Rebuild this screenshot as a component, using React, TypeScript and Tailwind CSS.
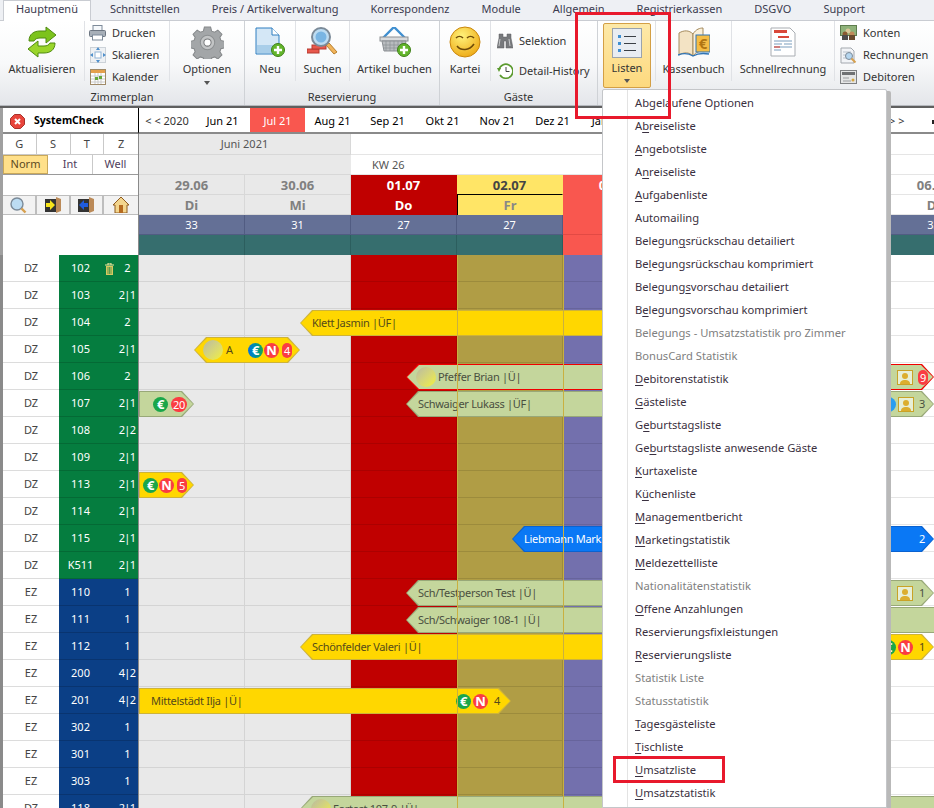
import React from 'react';

const tabs = ['Schnittstellen', 'Preis / Artikelverwaltung', 'Korrespondenz', 'Module', 'Allgemein', 'Registrierkassen', 'DSGVO', 'Support'];
const months = ['Jun 21', 'Jul 21', 'Aug 21', 'Sep 21', 'Okt 21', 'Nov 21', 'Dez 21', 'Jan 22', 'Feb 22', 'Mrz 22', 'Apr 22', 'Mai 22'];

const rooms: [string, string, string][] = [
  ['DZ', '102', '2'], ['DZ', '103', '2|1'], ['DZ', '104', '2'], ['DZ', '105', '2|1'], ['DZ', '106', '2'],
  ['DZ', '107', '2|1'], ['DZ', '108', '2|2'], ['DZ', '109', '2|1'], ['DZ', '113', '2|1'], ['DZ', '114', '2|1'],
  ['DZ', '115', '2|1'], ['DZ', 'K511', '2|1'], ['EZ', '110', '1'], ['EZ', '111', '1'], ['EZ', '112', '1'],
  ['EZ', '200', '4|2'], ['EZ', '201', '4|2'], ['EZ', '302', '1'], ['EZ', '301', '1'], ['EZ', '303', '1'], ['DZ', '118', '2|1'],
];

// label, index of the underlined letter (-1 = none), greyed out
const menuItems: [string, number, boolean?][] = [
  ['Abgelaufene Optionen', -1], ['Abreiseliste', 1], ['Angebotsliste', 0], ['Anreiseliste', 1], ['Aufgabenliste', 0],
  ['Automailing', -1], ['Belegungsrückschau detailiert', 7], ['Belegungsrückschau komprimiert', 2],
  ['Belegungsvorschau detailiert', 8], ['Belegungsvorschau komprimiert', 1],
  ['Belegungs - Umsatzstatistik pro Zimmer', -1, true], ['BonusCard Statistik', -1, true],
  ['Debitorenstatistik', 0], ['Gästeliste', 0], ['Geburtstagsliste', 1], ['Geburtstagsliste anwesende Gäste', 2],
  ['Kurtaxeliste', 0], ['Küchenliste', 1], ['Managementbericht', 0], ['Marketingstatistik', 0], ['Meldezettelliste', 0],
  ['Nationalitätenstatistik', -1, true], ['Offene Anzahlungen', 0], ['Reservierungsfixleistungen', -1], ['Reservierungsliste', 0],
  ['Statistik Liste', -1, true], ['Statusstatistik', -1, true], ['Tagesgästeliste', 0], ['Tischliste', 0],
  ['Umsatzliste', 0], ['Umsatzstatistik', 0],
];

function Refresh() {
  return (
    <svg width="32" height="32" viewBox="0 0 32 32">
      <path d="M3 15c0-7 5-10 11-10h6V1l10 8-10 8v-5h-6c-3 0-5 1-6 3z" fill="#7cc31c" stroke="#4f8a10" />
      <path d="M29 17c0 7-5 10-11 10h-6v4L2 23l10-8v5h6c3 0 5-1 6-3z" fill="#9ad52b" stroke="#4f8a10" />
    </svg>
  );
}

function Printer() {
  return (
    <svg width="17" height="16" viewBox="0 0 17 16">
      <rect x="4" y="0.5" width="9" height="5" fill="#f5f8fb" stroke="#7d8a99" />
      <rect x="0.5" y="5.5" width="16" height="6" rx="1" fill="#a7afb8" stroke="#6d7682" />
      <rect x="3.5" y="10" width="10" height="5" fill="#fff" stroke="#7d8a99" />
    </svg>
  );
}

function Scale() {
  return (
    <svg width="16" height="16" viewBox="0 0 16 16">
      <rect x="0.5" y="0.5" width="15" height="15" fill="#eef1f4" stroke="#ccd2d8" />
      <rect x="5" y="5" width="6" height="6" fill="#fff" stroke="#8fb3d6" />
      <path d="M8 0l2 3H6zM8 16l-2-3h4zM0 8l3-2v4zM16 8l-3 2V6z" fill="#4f8fcb" />
    </svg>
  );
}

function Calendar() {
  return (
    <svg width="16" height="16" viewBox="0 0 16 16">
      <rect x="0.5" y="0.5" width="15" height="15" fill="#fff" stroke="#a08a68" />
      <rect x="1" y="1" width="14" height="3" fill="#e5a04c" />
      <path d="M1 7h14M1 10h14M1 13h14M5 4v11M8 4v11M11 4v11" stroke="#c9c9c9" />
      <rect x="5" y="8" width="3" height="3" fill="#66a83a" />
      <rect x="9" y="7" width="3" height="3" fill="#66a83a" />
    </svg>
  );
}

function Gear() {
  return (
    <svg width="33" height="33" viewBox="0 0 32 32">
      <path
        d="M13 1h6l1 4 3 1 3-2 4 4-2 3 1 3 4 1v6l-4 1-1 3 2 3-4 4-3-2-3 1-1 4h-6l-1-4-3-1-3 2-4-4 2-3-1-3-4-1v-6l4-1 1-3-2-3 4-4 3 2 3-1z"
        fill="#a3a6a8"
        stroke="#85888a"
      />
      <circle cx="16" cy="16" r="7" fill="#c2c4c5" stroke="#8d9092" />
      <circle cx="16" cy="16" r="3.5" fill="#fff" stroke="#77797b" />
    </svg>
  );
}

function PlusBadge() {
  return (
    <svg width="14" height="14" viewBox="0 0 14 14" className="absolute right-0 bottom-0">
      <circle cx="7" cy="7" r="6.5" fill="#63b52b" stroke="#3e7f18" />
      <path d="M7 3v8M3 7h8" stroke="#fff" strokeWidth="2.4" />
    </svg>
  );
}

function NewDoc() {
  return (
    <div className="relative w-[30px] h-[30px]">
      <svg width="26" height="28" viewBox="0 0 26 28">
        <path d="M1 1h16l7 7v19H1z" fill="#d4e7f6" stroke="#2f7fc0" />
        <path d="M17 1v7h7" fill="#fff" stroke="#2f7fc0" />
        <rect x="2" y="18" width="21" height="8" fill="#a9cee9" />
      </svg>
      <PlusBadge />
    </div>
  );
}

function Search() {
  return (
    <svg width="32" height="30" viewBox="0 0 32 30">
      <rect x="0" y="22" width="12" height="4" fill="#e8584c" stroke="#b53a30" />
      <rect x="5" y="18" width="14" height="4" fill="#e8584c" stroke="#b53a30" />
      <path d="M19 18l8 9 3-2-8-9z" fill="#f2b45a" stroke="#b67f2f" />
      <circle cx="14" cy="10" r="9" fill="#bcdcf2" stroke="#7b8a98" strokeWidth="2" />
      <circle cx="14" cy="10" r="5.5" fill="#79b5e3" />
    </svg>
  );
}

function Basket() {
  return (
    <div className="relative w-[32px] h-[30px]">
      <svg width="30" height="26" viewBox="0 0 30 26">
        <path d="M15 0L3 12M15 0l12 12" stroke="#3f8fd0" strokeWidth="2.4" fill="none" />
        <rect x="1" y="10" width="28" height="4" fill="#d8dadc" stroke="#8b8f93" />
        <path d="M3 14h24l-2 10H5z" fill="#b9bcbf" stroke="#8b8f93" />
        <path d="M7 14v10M11 14v10M15 14v10M19 14v10M23 14v10M4 18h22M4 21h22" stroke="#8b8f93" strokeWidth="0.7" />
      </svg>
      <PlusBadge />
    </div>
  );
}

function Smiley() {
  return (
    <svg width="32" height="32" viewBox="0 0 32 32">
      <defs>
        <radialGradient id="smile" cx="0.4" cy="0.3" r="0.8">
          <stop offset="0" stopColor="#fff27a" />
          <stop offset="1" stopColor="#eca40e" />
        </radialGradient>
      </defs>
      <circle cx="16" cy="16" r="15" fill="url(#smile)" stroke="#c9860c" />
      <path d="M7 12c2-2 5-2 7 0M18 12c2-2 5-2 7 0" stroke="#6e4a08" strokeWidth="1.6" fill="none" />
      <path d="M8 20c4 5 12 5 17-2" stroke="#6e4a08" strokeWidth="1.6" fill="none" />
    </svg>
  );
}

function Binoculars() {
  return (
    <svg width="16" height="16" viewBox="0 0 16 16">
      <path d="M2 1h4v3h4V1h4v4l2 10H9V8H7v7H0L2 5z" fill="#77797c" stroke="#5d5f62" strokeWidth="0.5" />
      <path d="M3 6l-1 7M12 6l1 7" stroke="#c7c9cb" />
    </svg>
  );
}

function History() {
  return (
    <svg width="16" height="16" viewBox="0 0 16 16">
      <path d="M2 7a7 7 0 1 1 1 5" fill="#fff" stroke="#5b9a2e" strokeWidth="1.6" />
      <path d="M0 5l4 0-2 4z" fill="#5b9a2e" />
      <path d="M9 4v4.5h3.5" stroke="#444" fill="none" />
    </svg>
  );
}

function ListIcon() {
  return (
    <svg width="30" height="30" viewBox="0 0 30 30">
      <rect x="0.5" y="0.5" width="29" height="29" fill="#e9edf2" stroke="#9aa3ad" />
      <rect x="6" y="7" width="3" height="3" fill="#3f8fd0" />
      <rect x="6" y="14" width="3" height="3" fill="#3f8fd0" />
      <rect x="6" y="21" width="3" height="3" fill="#3f8fd0" />
      <path d="M12 8.5h12M12 15.5h12M12 22.5h12" stroke="#3b4046" />
    </svg>
  );
}

function CashBook() {
  return (
    <svg width="32" height="30" viewBox="0 0 32 30">
      <path d="M1 6c5-3 10-3 14 1v22c-4-4-9-4-14-1z" fill="#f3e3c4" stroke="#a48a5d" />
      <path d="M15 7c3-5 7-6 10-6v23c-3 0-7 1-10 5z" fill="#faf0da" stroke="#a48a5d" />
      <rect x="18" y="8" width="14" height="17" fill="#f5bd45" stroke="#2f74b5" />
      <text x="25" y="22" textAnchor="middle" fontSize="15" fontWeight="700" fill="#b07512">€</text>
      <path d="M0 28c5-2 10-2 15 1 5-3 10-3 16-2" stroke="#2f74b5" strokeWidth="1.4" fill="none" />
    </svg>
  );
}

function Invoice() {
  return (
    <svg width="26" height="30" viewBox="0 0 26 30">
      <path d="M1 1h19l5 5v23H1z" fill="#fff" stroke="#a9adb2" />
      <rect x="4" y="3" width="13" height="3" fill="#d9483a" />
      <rect x="8" y="9" width="11" height="2" fill="#d9483a" />
      <path d="M4 14h18M4 17h8M14 17h8M4 20h18M4 23h7" stroke="#7a9dbd" strokeWidth="1.2" />
      <path d="M4 20h6" stroke="#d9483a" strokeWidth="1.2" />
    </svg>
  );
}

function Konten() {
  return (
    <svg width="17" height="16" viewBox="0 0 17 16">
      <rect x="0.5" y="0.5" width="16" height="10" fill="#8fb27a" stroke="#5e7c4e" />
      <circle cx="8" cy="6" r="2.5" fill="#d9c89a" />
      <circle cx="5" cy="9" r="2.5" fill="#8a5a32" />
      <rect x="2" y="10" width="6" height="5" fill="#4d4d4d" />
      <circle cx="12" cy="9" r="2.5" fill="#c08a5a" />
      <rect x="9" y="10" width="6" height="5" fill="#6a4a2d" />
    </svg>
  );
}

function Bills() {
  return (
    <svg width="17" height="17" viewBox="0 0 17 17">
      <path d="M1 1h10l3 3v12H1z" fill="#f2f4f7" stroke="#a3a8ae" />
      <path d="M3 5h8M3 8h3M3 11h3" stroke="#b9c3cd" />
      <circle cx="9" cy="9" r="3.5" fill="#b5d6ef" stroke="#7c8a98" />
      <path d="M11.5 11.5l4 4" stroke="#d7a04e" strokeWidth="2" />
    </svg>
  );
}

function Debtors() {
  return (
    <svg width="17" height="14" viewBox="0 0 17 14">
      <rect x="0.5" y="0.5" width="16" height="13" fill="#e4e5e5" stroke="#7e8082" />
      <rect x="2" y="2" width="13" height="3" fill="#6f7173" />
      <path d="M3 8h6M3 11h8" stroke="#9b9d9f" />
      <circle cx="13" cy="10" r="1.5" fill="#d6a63d" />
    </svg>
  );
}

function BigButton({ label, width, icon, arrow, sep = true }: { label: string; width: string; icon: React.ReactNode; arrow?: boolean; sep?: boolean }) {
  return (
    <div className={`${width} relative flex flex-col items-center pt-[5px] ${sep ? 'border-r border-[#e0e2e6]' : ''} h-[60px]`}>
      <div className="h-[32px] flex items-center justify-center">{icon}</div>
      <span className="mt-px leading-[20px] whitespace-nowrap">{label}</span>
      {arrow && <span className="mt-[2px] border-x-[3px] border-t-[4px] border-x-transparent border-t-[#555]" />}
    </div>
  );
}

function SmallButton({ icon, label }: { icon: React.ReactNode; label: string }) {
  return (
    <div className="h-[22px] flex items-center gap-[6px] whitespace-nowrap">
      <span className="w-[17px] flex justify-center">{icon}</span>
      {label}
    </div>
  );
}

function Ribbon() {
  return (
    <div className="relative">
      <div className="h-[21px] flex items-end bg-[#eef0f4] border-b border-[#c9ccd2] text-[#3b3b4f]">
        <div className="ml-[3px] w-[88px] h-[21px] -mb-px pb-[3px] flex items-center justify-center bg-white border-x border-t border-[#c9ccd2]">Hauptmenü</div>
        <div className="flex ml-[19px] gap-[32px] h-[18px] mb-[2px] items-center">
          {tabs.map((t) => (
            <span key={t} className="whitespace-nowrap">{t}</span>
          ))}
        </div>
      </div>

      <div className="h-[85px] flex bg-gradient-to-b from-white via-[#f8f9fa] to-[#e4e6ea] border-b border-[#b5b8bd] text-[#333]">
        <div className="w-[245px] border-r border-[#cfd2d6] flex flex-col">
          <div className="flex h-[66px]">
            <BigButton label="Aktualisieren" width="w-[85px]" icon={<Refresh />} />
            <div className="w-[85px] pl-[4px] border-r border-[#e0e2e6] h-[60px] pt-px">
              <SmallButton icon={<Printer />} label="Drucken" />
              <SmallButton icon={<Scale />} label="Skalieren" />
              <SmallButton icon={<Calendar />} label="Kalender" />
            </div>
            <BigButton label="Optionen" width="w-[74px]" icon={<Gear />} arrow sep={false} />
          </div>
          <div className="text-center leading-[14px] mt-[3px]">Zimmerplan</div>
        </div>

        <div className="w-[195px] border-r border-[#cfd2d6] flex flex-col">
          <div className="flex h-[66px]">
            <BigButton label="Neu" width="w-[51px]" icon={<NewDoc />} />
            <BigButton label="Suchen" width="w-[54px]" icon={<Search />} />
            <BigButton label="Artikel buchen" width="w-[89px]" icon={<Basket />} sep={false} />
          </div>
          <div className="text-center leading-[14px] mt-[3px]">Reservierung</div>
        </div>

        <div className="w-[158px] border-r border-[#cfd2d6] flex flex-col">
          <div className="flex h-[66px]">
            <BigButton label="Kartei" width="w-[51px]" icon={<Smiley />} />
            <div className="pl-[5px] pt-[9px] flex flex-col gap-[8px]">
              <SmallButton icon={<Binoculars />} label="Selektion" />
              <SmallButton icon={<History />} label="Detail-History" />
            </div>
          </div>
          <div className="text-center leading-[14px] mt-[3px]">Gäste</div>
        </div>

        <div className="flex flex-1 pl-[5px]">
          <div className="mt-[2px] w-[48px] h-[65px] rounded-[2px] border border-[#d39f45] bg-gradient-to-b from-[#fde9a8] to-[#fdd97e] flex flex-col items-center pt-[3px]">
            <div className="h-[32px] flex items-center"><ListIcon /></div>
            <span className="-mt-px leading-[20px]">Listen</span>
            <span className="mt-px border-x-[3px] border-t-[4px] border-x-transparent border-t-[#555]" />
          </div>
          <div className="w-[5px] h-[60px] border-r border-[#e0e2e6]" />
          <BigButton label="Kassenbuch" width="w-[76px]" icon={<CashBook />} />
          <BigButton label="Schnellrechnung" width="w-[103px]" icon={<Invoice />} />
          <div className="pl-[5px] pt-px">
            <SmallButton icon={<Konten />} label="Konten" />
            <SmallButton icon={<Bills />} label="Rechnungen" />
            <SmallButton icon={<Debtors />} label="Debitoren" />
          </div>
        </div>
      </div>
    </div>
  );
}

function LeftHeader() {
  return (
    <div className="w-[136px] shrink-0 border-r border-[#8a8a8a] text-[#444] bg-white">
      <div className="h-[26px] flex items-center pl-[7px] pt-[2px] gap-[9px] border-b-2 border-[#8a8a8a] -mr-px border-r border-r-black">
        <svg width="15" height="15" viewBox="0 0 15 15">
          <path d="M4.5 0.5h6l4 4v6l-4 4h-6l-4-4v-6z" fill="#e8453c" stroke="#a8322b" />
          <path d="M5 5l5 5M10 5l-5 5" stroke="#fff" strokeWidth="2" />
        </svg>
        <span className="font-bold text-black text-[10.5px]">SystemCheck</span>
      </div>
      <div className="h-[21px] grid grid-cols-4 border-b border-[#c9c9c9]">
        {['G', 'S', 'T', 'Z'].map((c) => (
          <div key={c} className="flex items-center justify-center border-r border-[#c9c9c9] last:border-r-0">{c}</div>
        ))}
      </div>
      <div className="h-[20px] grid grid-cols-3 border-b border-[#9a9a9a]">
        <div className="bg-[#ffe08a] border border-[#c9a85a] flex items-center justify-center text-[#5c4a1f]">Norm</div>
        <div className="flex items-center justify-center border-r border-[#c9c9c9] text-[#50405c]">Int</div>
        <div className="flex items-center justify-center text-[#50405c]">Well</div>
      </div>
      <div className="h-[20px]" />
      <div className="h-[20px] grid grid-cols-4 bg-[#f2f2f2] border-y border-[#bdbdbd]">
        <div className="flex items-center justify-center border-r-2 border-[#bdbdbd]">
          <svg width="17" height="17" viewBox="0 0 17 17">
            <circle cx="7" cy="7" r="6" fill="#bcdcf2" stroke="#7b8a98" strokeWidth="1.4" />
            <path d="M11.5 11.5l4 4" stroke="#d7a04e" strokeWidth="2.4" />
          </svg>
        </div>
        <div className="flex items-center justify-center border-r-2 border-[#bdbdbd]">
          <svg width="16" height="16" viewBox="0 0 16 16">
            <rect x="0" y="2" width="11" height="13" fill="#333" />
            <path d="M1 6h4V3l5 5-5 5v-3H1z" fill="#f7e41a" />
            <path d="M11 0l5 2v12l-5 2z" fill="#bb8a58" />
          </svg>
        </div>
        <div className="flex items-center justify-center border-r-2 border-[#bdbdbd]">
          <svg width="16" height="16" viewBox="0 0 16 16">
            <rect x="0" y="2" width="11" height="13" fill="#333" />
            <path d="M10 6H6V3L1 8l5 5v-3h4z" fill="#1f5ce0" />
            <path d="M11 0l5 2v12l-5 2z" fill="#bb8a58" />
          </svg>
        </div>
        <div className="flex items-center justify-center">
          <svg width="16" height="16" viewBox="0 0 16 16">
            <path d="M8 0L0 8h2v8h12V8h2z" fill="#f3d58d" stroke="#8e5a1f" />
            <rect x="6" y="8" width="4" height="8" fill="#b66a1f" />
          </svg>
        </div>
      </div>
      <div className="h-[40px]" />
    </div>
  );
}

const dayHeads = [
  { date: '29.06', day: 'Di', count: '33', className: 'bg-[#e9e9e9] border-[#d8d8d8] border-b', dateClass: 'text-[#808080]', dayClass: 'text-[#808080]' },
  { date: '30.06', day: 'Mi', count: '31', className: 'bg-[#e9e9e9] border-[#d8d8d8] border-b', dateClass: 'text-[#808080]', dayClass: 'text-[#808080]' },
  { date: '01.07', day: 'Do', count: '27', className: 'bg-[#c00000] border-[#c00000]', dateClass: 'text-white', dayClass: 'text-white' },
  { date: '02.07', day: 'Fr', count: '27', className: 'bg-[#ffe566] border-[#ffe566]', dateClass: 'text-[#444] border-b-black border-b', dayClass: 'text-[#888] border-l border-l-black' },
  { date: '03.07', day: 'Sa', count: '27', className: 'bg-[#f9574f] border-[#f9574f]', dateClass: 'text-white', dayClass: 'text-white' },
  { date: '04.07', day: 'So', count: '30', className: 'bg-white border-[#e5e5e5] border-b', dateClass: 'text-[#808080]', dayClass: 'text-[#808080]' },
  { date: '05.07', day: 'Mo', count: '32', className: 'bg-white border-[#e5e5e5] border-b', dateClass: 'text-[#808080]', dayClass: 'text-[#808080]' },
  { date: '06.07', day: 'Di', count: '33', className: 'bg-white border-[#e5e5e5] border-b', dateClass: 'text-[#808080]', dayClass: 'text-[#808080]' },
];

function CalendarHeader() {
  return (
    <div className="flex-1 min-w-0 overflow-hidden">
      <div className="h-[26px] flex items-center border-b-2 border-[#8a8a8a] text-black">
        <div className="w-[56px] shrink-0 pt-[3px] text-center text-[#333] whitespace-nowrap">{'< < 2020'}</div>
        {months.map((m, i) => (
          <div key={m} className={`w-[55px] shrink-0 h-full pt-[3px] flex items-center justify-center ${i === 1 ? 'bg-[#f9574f] text-white' : ''}`}>{m}</div>
        ))}
        <div className="w-[77px] shrink-0 pt-[3px] pl-[34px] text-[#333] whitespace-nowrap">{'> >'}</div>
        <span className="w-[2px] h-[4px] mt-[3px] shrink-0 bg-[#222]" />
      </div>
      <div className="flex h-[21px]">
        <div className="w-[212px] shrink-0 bg-[#e9e9e9] border-b border-r border-[#d8d8d8] flex items-center justify-center text-[#555]">Juni 2021</div>
        <div className="flex-1 border-b border-[#e5e5e5]" />
      </div>
      <div className="flex h-[20px]">
        <div className="w-[212px] shrink-0 bg-[#e9e9e9] border-b border-[#d8d8d8]" />
        <div className="flex-1 border-b border-[#e5e5e5] pl-[21px] leading-[19px] text-[#555]">KW 26</div>
      </div>
      <div className="flex w-[848px]">
        {dayHeads.map((d) => (
          <div key={d.date} className="w-[106px] shrink-0 font-bold text-center text-[13px]">
            <div className={`h-[20px] leading-[20px] border-r ${d.className} ${d.dateClass}`}>{d.date}</div>
            <div className={`h-[20px] leading-[20px] border-r ${d.className} ${d.dayClass}`}>{d.day}</div>
          </div>
        ))}
      </div>
      <div className="flex w-[848px] text-white">
        {dayHeads.map((d, i) => (
          <div key={d.date} className={`w-[106px] h-[20px] shrink-0 leading-[20px] text-center border-r border-b ${i === 4 ? 'bg-[#f9574f] border-[#e24a44] text-[#f9574f]' : 'bg-[#647096] border-[#515c82]'}`}>{d.count}</div>
        ))}
      </div>
      <div className="flex w-[848px]">
        {dayHeads.map((d, i) => (
          <div key={d.date} className={`w-[106px] h-[20px] shrink-0 border-r ${i === 4 ? 'bg-[#f9574f] border-[#e24a44]' : 'bg-[#366e6e] border-[#2c5e5e]'}`} />
        ))}
      </div>
    </div>
  );
}

const dayCells = [
  'bg-[#e9e9e9] border-[#d4d4d4]',
  'bg-[#e9e9e9] border-[#d4d4d4]',
  'bg-[#c00000] border-[#ab0000]',
  'bg-[#b09d45] border-[#9c8b3c]',
  'bg-[#7370ad] border-[#67649c]',
  'bg-white border-[#e5e5e5]',
  'bg-white border-[#e5e5e5]',
  'bg-white border-[#e5e5e5]',
];

function RoomRow({ type, no, beds }: { type: string; no: string; beds: string }) {
  const green = type === 'DZ' && no !== '118';
  return (
    <div className="flex h-[27px]">
      <div className="w-[3px] bg-[#8a8a8a] shrink-0" />
      <div className="w-[56px] shrink-0 pt-px flex items-center justify-center bg-white border-b border-[#dcdcdc] text-[#444]">{type}</div>
      <div className={`w-[79px] shrink-0 relative flex items-center pt-px text-white border-b ${green ? 'bg-[#057d3f] border-[#046a35]' : 'bg-[#0b3f86] border-[#093470]'}`}>
        <span className="w-[43px] text-center">{no}</span>
        {no === '102' && (
          <svg width="9" height="12" viewBox="0 0 9 12" className="absolute left-[46px] top-[8px]">
            <path d="M0 2h9M3 2V0h3v2" stroke="#f5e9a0" fill="none" />
            <path d="M1 3h7v9H1z" fill="#d9c860" />
            <path d="M3 4v7M4.5 4v7M6 4v7" stroke="#057d3f" strokeWidth="0.6" />
          </svg>
        )}
        <span className="absolute left-[58px] w-[20px] text-center tracking-[-0.7px] whitespace-nowrap">{beds}</span>
      </div>
      <div className="w-px bg-[#8a8a8a] shrink-0" />
      {dayCells.map((c, i) => (
        <div key={i} className={`w-[106px] shrink-0 border-b border-r ${c}`} />
      ))}
    </div>
  );
}

function Euro({ blue }: { blue?: boolean }) {
  return (
    <span className={`w-[15px] h-[15px] shrink-0 rounded-full flex items-center justify-center text-white text-[13px] font-bold leading-none ${blue ? 'bg-gradient-to-r from-[#0f6fe0] to-[#1fa64a]' : 'bg-[#1aa64a]'}`}>€</span>
  );
}

function NBadge() {
  return <span className="w-[15px] h-[15px] shrink-0 rounded-full bg-[#fa3c42] flex items-center justify-center text-white text-[13px] font-bold leading-none">N</span>;
}

function Count({ n }: { n: string }) {
  return <span className="min-w-[10px] h-[15px] px-[2px] shrink-0 rounded-full bg-[#fa3c42] flex items-center justify-center text-white text-[11px] leading-none">{n}</span>;
}

function Person() {
  return (
    <span className="w-[16px] h-[15px] shrink-0 border border-[#c9a227] bg-white/60 flex items-end justify-center">
      <svg width="12" height="12" viewBox="0 0 12 12">
        <circle cx="6" cy="4" r="3" fill="#dcae2e" />
        <path d="M1 12c0-3 2-4 5-4s5 1 5 4z" fill="#dcae2e" />
      </svg>
    </span>
  );
}

function Guest() {
  return <span className="w-[20px] h-[20px] shrink-0 rounded-full bg-gradient-to-br from-[#b9b9a0] to-[#f4f020]" />;
}

const shapeBoth = '[clip-path:polygon(12px_0,calc(100%-12px)_0,100%_50%,calc(100%-12px)_100%,12px_100%,0_50%)]';
const shapeLeft = '[clip-path:polygon(12px_0,100%_0,100%_100%,12px_100%,0_50%)]';
const shapeRight = '[clip-path:polygon(0_0,calc(100%-12px)_0,100%_50%,calc(100%-12px)_100%,0_100%)]';

const palettes = {
  yellow: { edge: 'bg-[#cdb33a]', fill: 'bg-[#ffd700]', text: 'text-[#554a1a]' },
  green: { edge: 'bg-[#98a878]', fill: 'bg-[#c4d69c]', text: 'text-[#4a4f3f]' },
  alert: { edge: 'bg-[#f00000]', fill: 'bg-[#c4d69c]', text: 'text-[#4a4f3f]' },
  blue: { edge: 'bg-[#0a62d0]', fill: 'bg-[#0a78f5]', text: 'text-white' },
};

function Bar({ row, left, right, shape, color, children, side }: { row: number; left: number; right: number; shape: string; color: keyof typeof palettes; children?: React.ReactNode; side?: React.ReactNode }) {
  const p = palettes[color];
  return (
    <div className={`absolute h-[26px] ${p.edge} ${shape}`} style={{ top: row * 27 + 1, left, width: right - left }}>
      <div className={`absolute inset-[1px] ${p.fill} ${shape} ${p.text} flex items-center whitespace-nowrap tracking-[-0.3px]`}>
        {children}
        {side && <div className="ml-auto flex items-center gap-[2px] pr-[5px]">{side}</div>}
      </div>
    </div>
  );
}

function Planner() {
  return (
    <div className="relative">
      <div className="flex">
        <div className="w-[3px] bg-[#a0a0a0] shrink-0" />
        <LeftHeader />
        <CalendarHeader />
      </div>

      <div className="relative w-[1000px]">
        {rooms.map(([type, no, beds]) => (
          <RoomRow key={no} type={type} no={no} beds={beds} />
        ))}

        <Bar row={2} left={300} right={700} shape={shapeLeft} color="yellow"><span className="pl-[11px]">Klett Jasmin |ÜF|</span></Bar>
        <Bar row={3} left={194} right={300} shape={shapeBoth} color="yellow">
          <span className="flex items-center pl-[8px]"><Guest /><span className="ml-[3px] w-[22px]">A</span><Euro blue /><span className="w-px" /><NBadge /><span className="w-[3px]" /><Count n="4" /></span>
        </Bar>
        <Bar row={4} left={406} right={934} shape={shapeBoth} color="alert" side={<><Person /><span className="w-px" /><Count n="9" /></>}>
          <span className="pl-[9px] flex items-center gap-[2px]"><Guest /><span>Pfeffer Brian |Ü|</span></span>
        </Bar>
        <Bar row={5} left={139} right={194} shape={shapeRight} color="green">
          <span className="flex items-center pl-[13px] gap-[3px]"><Euro /><Count n="20" /></span>
        </Bar>
        <Bar row={5} left={406} right={934} shape={shapeBoth} color="green" side={<>
          <span className="w-[15px] h-[15px] rounded-full bg-[#2a9df0] text-white text-[12px] font-bold flex items-center justify-center leading-none">i</span>
          <Person /><span className="w-px" /><span>3</span><span className="w-[1px]" />
        </>}>
          <span className="pl-[11px]">Schwaiger Lukass |ÜF|</span>
        </Bar>
        <Bar row={8} left={139} right={194} shape={shapeRight} color="yellow">
          <span className="flex items-center pl-[3px] gap-[1px]"><Euro /><NBadge /><span className="w-[1px]" /><Count n="5" /></span>
        </Bar>
        <Bar row={10} left={512} right={934} shape={shapeBoth} color="blue" side={<><span>2</span><span className="w-[1px]" /></>}>
          <span className="pl-[11px]">Liebmann Markus</span>
        </Bar>
        <Bar row={12} left={406} right={934} shape={shapeBoth} color="green" side={<><Person /><span className="w-[2px]" /><span>1</span><span className="w-[1px]" /></>}>
          <span className="pl-[11px]">Sch/Testperson Test |Ü|</span>
        </Bar>
        <Bar row={13} left={406} right={1000} shape={shapeLeft} color="green"><span className="pl-[11px]">Sch/Schwaiger 108-1 |Ü|</span></Bar>
        <Bar row={14} left={300} right={934} shape={shapeBoth} color="yellow" side={<><Euro /><NBadge /><span className="w-[2px]" /><span>1</span><span className="w-[1px]" /></>}>
          <span className="pl-[11px]">Schönfelder Valeri |Ü|</span>
        </Bar>
        <Bar row={16} left={139} right={511} shape={shapeRight} color="yellow" side={<>
          <Euro /><NBadge /><span className="w-[2px]" /><span>4</span><span className="w-[3px]" />
        </>}>
          <span className="pl-[11px]">Mittelstädt Ilja |Ü|</span>
        </Bar>
        <Bar row={20} left={300} right={1000} shape={shapeLeft} color="green">
          <span className="pl-[10px] flex items-center gap-[2px]"><Guest /><span>Fortest 107-9 |Ü|</span></span>
        </Bar>

        <div className="absolute top-0 bottom-0 left-[457px] w-px bg-[#c9b040]" />
        <div className="absolute top-0 bottom-0 left-[563px] w-px bg-[#c9b040]" />
      </div>
    </div>
  );
}

function ListenMenu() {
  return (
    <div className="absolute left-[602px] top-[89px] w-[285px] h-[719px] bg-white border border-[#c4c6c9] rounded-t-[2px] shadow-[4px_2px_0_0_#b9b9b9] pt-[2px] text-[#3a3040] text-[11.2px]">
      <div className="absolute left-[24px] top-0 bottom-0 w-px bg-[#e3e3e3]" />
      {menuItems.map(([label, key, grey]) => (
        <div key={label} className={`h-[23px] flex items-center pl-[32px] whitespace-nowrap ${grey ? 'text-[#808080]' : ''}`}>
          {key < 0 ? (
            label
          ) : (
            <span>
              {label.slice(0, key)}
              <span className="underline underline-offset-2">{label[key]}</span>
              {label.slice(key + 1)}
            </span>
          )}
        </div>
      ))}
    </div>
  );
}

function App() {
  return (
    <div className="relative w-[934px] h-[808px] overflow-hidden bg-white text-[11px] [font-family:'Noto_Sans',sans-serif]">
      <Ribbon />
      <div className="h-[2px] bg-[#5f5f5f]" />
      <Planner />
      <ListenMenu />
      {/* red markers drawn over the screenshot */}
      <div className="absolute left-[575px] top-[12px] w-[96px] h-[107px] border-[3px] border-[#e8192c]" />
      <div className="absolute left-[613px] top-[756px] w-[112px] h-[27px] border-[3px] border-[#e8192c]" />
    </div>
  );
}

export default App;
